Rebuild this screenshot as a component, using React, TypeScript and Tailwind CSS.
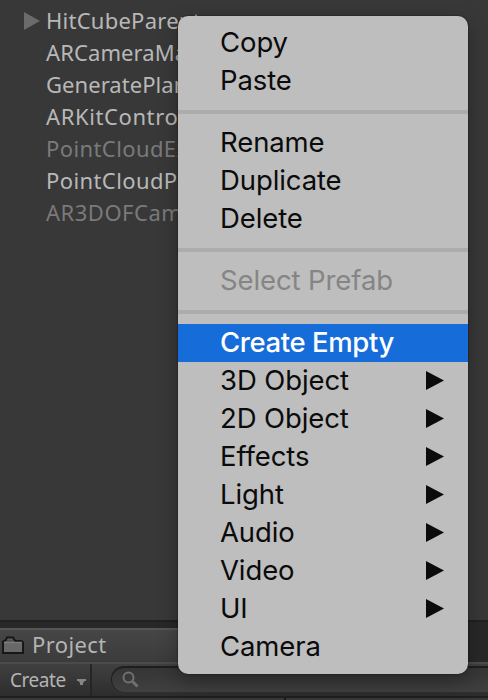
import { clsx } from "clsx";

type Entry = { label: string; submenu?: boolean; disabled?: boolean; active?: boolean };

const objects = [
  { label: "HitCubeParent", dim: false, parent: true, tracking: "tracking-[0.25px]" },
  { label: "ARCameraManager", dim: false, tracking: "tracking-[0.1px]" },
  { label: "GeneratePlanes", dim: false, tracking: "tracking-[0.05px]" },
  { label: "ARKitControl", dim: false, tracking: "tracking-[0.6px]" },
  { label: "PointCloudExample", dim: true, tracking: "tracking-[0.4px]" },
  { label: "PointCloudParticle", dim: false, tracking: "tracking-[0.4px]" },
  { label: "AR3DOFCamera", dim: true, tracking: "tracking-[0.5px]" },
];

const groups: Entry[][] = [
  [{ label: "Copy" }, { label: "Paste" }],
  [{ label: "Rename" }, { label: "Duplicate" }, { label: "Delete" }],
  [{ label: "Select Prefab", disabled: true }],
  [
    { label: "Create Empty", active: true },
    { label: "3D Object", submenu: true },
    { label: "2D Object", submenu: true },
    { label: "Effects", submenu: true },
    { label: "Light", submenu: true },
    { label: "Audio", submenu: true },
    { label: "Video", submenu: true },
    { label: "UI", submenu: true },
    { label: "Camera" },
  ],
];

function Hierarchy() {
  return (
    <ul className="h-[620px] overflow-hidden bg-[#383838] pt-1 text-[22px]">
      {objects.map((o) => (
        <li key={o.label} className="flex h-8 items-center">
          <span className="flex w-[46px] shrink-0 pt-px pl-6">
            {o.parent && (
              <svg width="16" height="18" viewBox="0 0 16 18">
                <path d="M0 0L16 9L0 18Z" fill="#6b6b6b" />
              </svg>
            )}
          </span>
          <span className={clsx("leading-8", o.tracking, o.dim ? "text-[#7a7a7a]" : "text-[#b8b8b8]")}>{o.label}</span>
        </li>
      ))}
    </ul>
  );
}

function ProjectPanel() {
  return (
    <div className="h-20 overflow-hidden border-t-2 border-[#202020] bg-[#282828] pt-[6px]">
      <div className="flex h-[34px] w-[240px] items-center border-t-2 border-[#555] bg-linear-to-b from-[#464646] to-[#3b3b3b]">
        <svg className="mb-0.5 ml-[2px] shrink-0" width="22" height="19" viewBox="0 0 22 19">
          <path d="M1 17V5.5L4 4L5 1.5H11L13 5H19.5L21 6.5V17Z" fill="#686868" stroke="#171717" strokeWidth="2" />
          <path d="M2 6.5H20" stroke="#7b7b7b" strokeWidth="1.5" />
          <path d="M5 4.5H11" stroke="#4c4c4c" strokeWidth="2" />
        </svg>
        <span className="ml-2 pb-[5px] text-[22px] leading-none tracking-[0.4px] text-[#b4b4b4]">Project</span>
      </div>
      <div className="flex h-[34px] border-t-2 border-[#4b4b4b] bg-linear-to-b from-[#404040] to-[#2d2d2d]">
        <div className="flex w-[92px] shrink-0 items-center border-r-2 border-[#252525] pl-[10px]">
          <span className="w-[67px] text-[19px] leading-none tracking-[-0.45px] text-[#b4b4b4]">Create</span>
          <svg className="mt-1" width="9" height="6" viewBox="0 0 9 6">
            <path d="M0 0H9V2H7.5L6 4V6H3V4L1.5 2H0Z" fill="#858585" />
          </svg>
        </div>
        <div className="mt-[2px] ml-[19px] flex h-[26px] flex-1 items-center rounded-l-full border-t-2 border-l border-[#1e1e1e] bg-linear-to-b from-[#353535] to-[#404040] pb-0.5 pl-[10px]">
          <svg width="17" height="17" viewBox="0 0 17 17" fill="none" stroke="#707070">
            <circle cx="6.5" cy="6.5" r="5" strokeWidth="2" />
            <path d="M10.5 10.5L15.5 15.5" strokeWidth="3" />
          </svg>
        </div>
      </div>
      <div className="flex h-1 border-t-2 border-[#1f1f1f] bg-[#393737]">
        <div className="w-[286px] border-r-2 border-[#1a1a1a]" />
      </div>
    </div>
  );
}

function ContextMenu() {
  return (
    <div
      className="absolute top-4 left-[178px] w-[290px] rounded-[10px] bg-[#bebebe] py-2 shadow-[0_0_2px_rgba(0,0,0,0.6),0_8px_20px_rgba(0,0,0,0.3)]"
      style={{ fontFamily: 'Inter, "Liberation Sans", sans-serif' }}
    >
      {groups.map((group, i) => (
        <div key={i}>
          {i > 0 && <div className="my-[10px] h-1 bg-[#acacac]" />}
          {group.map((e) => (
            <div
              key={e.label}
              className={clsx(
                "flex h-[38px] items-center justify-between pr-6 pl-[42px] text-[27.5px] whitespace-nowrap",
                e.active
                  ? "bg-[#166dd9] font-medium tracking-[-0.4px] text-white"
                  : e.disabled
                    ? "tracking-[-0.1px] text-[#858585]"
                    : "tracking-[-0.1px] text-[#0b0b0b]",
              )}
            >
              <span className="pb-0.5 leading-[30px]">{e.label}</span>
              {e.submenu && (
                <svg className="mb-px" width="18" height="19" viewBox="0 0 18 19">
                  <path d="M0 0L18 9.5L0 19Z" fill="#0b0b0b" />
                </svg>
              )}
            </div>
          ))}
        </div>
      ))}
    </div>
  );
}

export default function App() {
  return (
    <div
      className="relative h-[700px] w-[488px] overflow-hidden bg-[#383838]"
      style={{ fontFamily: '"Noto Sans", "Open Sans", sans-serif' }}
    >
      <Hierarchy />
      <ProjectPanel />
      <ContextMenu />
    </div>
  );
}
